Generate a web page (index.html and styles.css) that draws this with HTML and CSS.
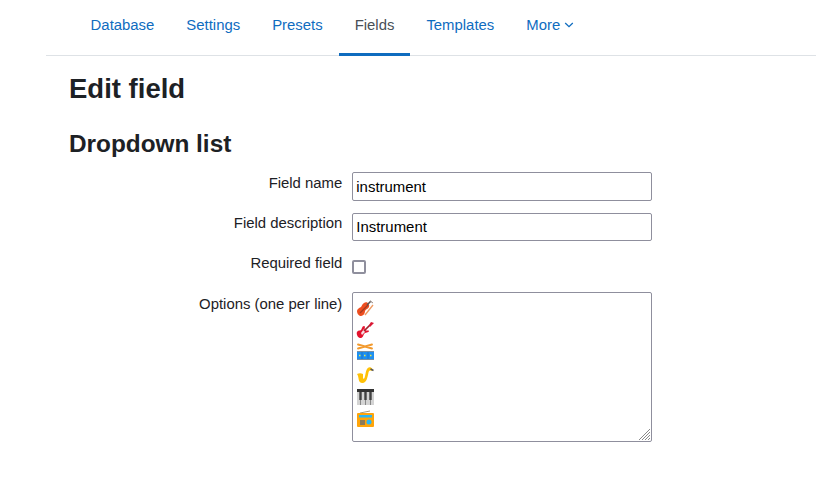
FILE: index.html
```html
<!DOCTYPE html>
<html lang="en"><head><meta charset="utf-8"><title>Edit field</title><link rel="stylesheet" href="styles.css"></head>
<body>
<nav class="tabs">
<a>Database</a><a>Settings</a><a>Presets</a><a class="active">Fields</a><a>Templates</a><a class="more">More<svg class="chev" viewBox="0 0 10 6"><path d="M1.2 1 5 4.6 8.8 1"/></svg></a>
</nav>
<main>
<h2>Edit field</h2>
<h3>Dropdown list</h3>
<form class="grid">
<label for="n">Field name</label><input id="n" type="text" value="instrument">
<label for="d">Field description</label><input id="d" type="text" value="Instrument">
<label for="r">Required field</label><input id="r" type="checkbox">
<span class="label">Options (one per line)</span>
<div class="options">
<svg viewBox="0 0 18 18" role="img" aria-label="Violin"><path d="M1 12c0-2 2-3 4-4 1-1 1-3 3-4 3-2 6 1 5 4-1 2-3 2-4 4 0 3-2 5-5 5-2-1-3-3-3-5z" fill="#ee4e20"/><path d="m4 14 8-8" stroke="#a33b20" stroke-width="1.2"/><path d="m11 6 4-4" stroke="#555" stroke-width="1.6"/><path d="m14 2 3 2" stroke="#9a8a84"/><path d="M9 16 17 6" stroke="#ef9a60" stroke-width="1.3"/></svg>
<svg viewBox="0 0 18 18" role="img" aria-label="Guitar"><path d="M1 11c1-2 3-1 4-2s1-4 3-4c2 0 0 3 1 4s4 0 4 1c0 2-4 1-5 3s-1 4-4 4c-2 0-4-4-3-6z" fill="#e3122d"/><path d="M5 12 8 8l1 3-3 3z" fill="#f8dfe2"/><path d="m8 10 6-6" stroke="#a3202c" stroke-width="1.7"/><path d="m13 4 2-3 3 1-4 4z" fill="#d91834"/></svg>
<svg class="drum" viewBox="0 0 18 18" role="img" aria-label="Drum"><path d="m2 1.5 14 4M16 1.5 2 5.5" stroke="#f29a2e" stroke-width="1.9" stroke-linecap="round"/><path d="M1 8h17v9H1z" fill="#1e8ff0"/><path d="M1 8.5h17M1 16.5h17" stroke="#7890a4"/><path d="M6 9v7M12 9v7" stroke="#1977cf"/><path d="M3 12.5h1.5M8 12.5h1.5M14 12.5h1.5" stroke="#e9e94a" stroke-width="1.3"/></svg>
<svg viewBox="0 0 18 18" role="img" aria-label="Saxophone"><path d="M1 8c2-1 4-1 6 0v4c0 1 1 1 1.500 0 1-3 1-6 2-8 1-3 4-4 6-1l-1 2c-2-1-2.500 0-3 1.500-1 5-2 10.500-6 10.500C1.500 17 3.500 11 1 8z" fill="#ffc107"/><path d="m14.500 3 3 1.500" stroke="#555" stroke-width="1.500"/></svg>
<svg viewBox="0 0 18 18" role="img" aria-label="Keyboard"><path d="M1 1h17v16H1z" fill="#d4d4d4"/><path d="M1 1h17v3H1z" fill="#333"/><path d="M4.5 4v8M9.5 4v8M14.5 4v8" stroke="#424242" stroke-width="2.4"/><path d="M4.5 12v5M9.5 12v5M14.5 12v5" stroke="#888" stroke-width="1"/></svg>
<svg viewBox="0 0 18 18" role="img" aria-label="Radio"><path d="m4 3 10-2" stroke="#a89878"/><rect x="1" y="3" width="17" height="14" rx="1" fill="#ffa50a"/><path d="M3 5h13v2.5H3z" fill="#29b6f6"/><path d="M4 10h5v5H4z" fill="#8d7b58"/><circle cx="13" cy="12" r="2.5" fill="#29b6f6"/></svg>
<svg class="grip" viewBox="0 0 11 11"><path d="M0 11 11 0M3 11l8-8M6 11l5-5M9 11l2-2"/></svg>
</div>
</form>
</main>
</body></html>
```
FILE: styles.css
```css
*{box-sizing:border-box}
body{margin:0;background:#fff;color:#1d2125;font:14.9px/22px "Liberation Sans",Arial,sans-serif}
.tabs{display:flex;height:56px;margin-left:46px;padding-left:28.6px;border-bottom:1px solid #dee2e6}
.tabs a{height:56px;padding:14px 16px 0;color:#0f6cbf;border-bottom:3px solid transparent}
.tabs .active{color:#495057;border-bottom-color:#0f6cbf}
.chev{width:10px;height:6px;margin-left:3.7px;fill:none;stroke:currentColor;stroke-width:1.3;vertical-align:2px}
main{padding:16px 0 0 69px}
h2{margin:0 0 22px;font-size:27.5px;line-height:34px}
h3{margin:0 0 13px;font-size:24.35px;line-height:31px}
.grid{display:grid;grid-template-columns:273.3px 300px;column-gap:9.7px;grid-template-rows:41px 40px 39px 150px}
label,.label{text-align:right}
label[for=d],label[for=r]{margin-top:-1px}
.label{margin-top:1px}
input[type=text]{width:300px;height:29px;margin:0;padding:1px 3.3px;border:1px solid #8f8f9d;border-radius:2px;font:14.95px "Liberation Sans",sans-serif;color:#000}
#d{height:28px;padding-bottom:2px}
input[type=checkbox]{appearance:none;margin:7px 0 0;width:14px;height:14px;border:2px solid #8f8f9d;border-radius:2px;background:#fff}
.options{position:relative;display:flex;flex-direction:column;gap:4.3px;width:300px;height:150px;padding:6px 3px;border:1px solid #8f8f9d;border-radius:2px}
.options svg{width:18px;height:18px;flex:none;fill:none}
.options .drum{margin:-1px 0 1px}
.options .grip{position:absolute;right:1px;bottom:1px;width:11px;height:11px;stroke:#8a8a8a;stroke-width:1}
```
